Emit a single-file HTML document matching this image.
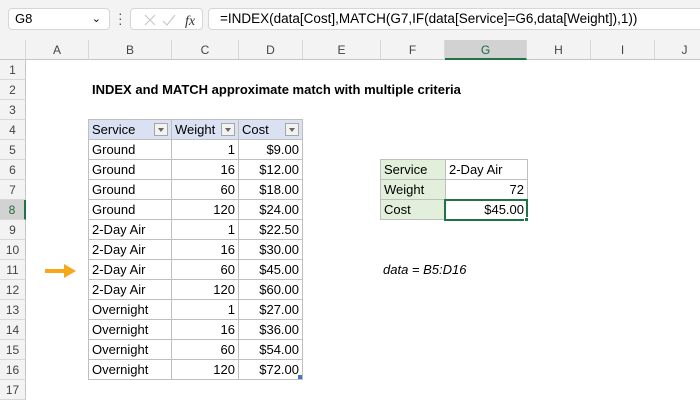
<!DOCTYPE html>
<html><head><style>
*{margin:0;padding:0;box-sizing:border-box}
body{width:700px;height:400px;overflow:hidden;background:#fff;font-family:"Liberation Sans",Calibri,sans-serif;font-size:13px;color:#000;position:relative}
.a{position:absolute}
.top{left:0;top:0;width:700px;height:40px;background:#f3f3f3}
.box{background:#fff;border:1px solid #d6d6d6;border-radius:4px;height:22px;top:8px}
.ch{top:40px;height:20px;background:#f3f3f3;border-right:1px solid #d8d8d8;border-bottom:1px solid #c6c6c6;text-align:center;line-height:20px;color:#444;font-size:12px}
.rh{left:0;width:26px;height:20px;background:#f3f3f3;border-bottom:1px solid #d8d8d8;border-right:1px solid #c6c6c6;text-align:center;line-height:20px;color:#444;font-size:12px}
.row{display:flex;height:20px}
.c{height:20px;line-height:19px;padding:0 3px;white-space:nowrap;border-right:1px solid #bfbfbf;border-bottom:1px solid #bfbfbf;position:relative;flex:none}
.r{text-align:right}
.hd .c{background:#d9e1f2}
.dd{position:absolute;right:3px;top:3px;width:14px;height:13px;border:1px solid #a6a6a6;background:#f2f2f2}
.dd:after{content:"";position:absolute;left:3px;top:4px;border-left:3px solid transparent;border-right:3px solid transparent;border-top:4px solid #666}
.g{background:#e2efda}
.w1{width:83px}.w2{width:67px}.w3{width:64px}
</style></head><body>
<div class="a top"></div>
<div class="a box" style="left:8px;width:102px;padding-left:6px;line-height:20px">G8<span style="position:absolute;right:8px;top:0;font-size:11px">&#8964;</span></div>
<div class="a" style="left:118px;top:11px;color:#555;font-size:14px;line-height:5px">·<br>·<br>·</div>
<div class="a box" style="left:130px;width:73px">
<svg width="73" height="22" style="position:absolute;left:0;top:0"><path d="M14 6l10 10M24 6l-10 10" stroke="#c8c8c8" stroke-width="1.2"/><path d="M32 12l4 4 8-10" stroke="#c8c8c8" stroke-width="1.2" fill="none"/><text x="54" y="16" font-family="Liberation Serif" font-style="italic" font-size="14" fill="#333">fx</text></svg></div>
<div class="a box" style="left:208px;width:500px;padding-left:11px;line-height:20px;font-size:13.5px">=INDEX(data[Cost],MATCH(G7,IF(data[Service]=G6,data[Weight]),1))</div>

<div class="a ch" style="left:0;width:26px"></div>
<div class="a ch" style="left:26px;width:63px">A</div>
<div class="a ch" style="left:89px;width:83px">B</div>
<div class="a ch" style="left:172px;width:67px">C</div>
<div class="a ch" style="left:239px;width:64px">D</div>
<div class="a ch" style="left:303px;width:78px">E</div>
<div class="a ch" style="left:381px;width:64px">F</div>
<div class="a ch" style="left:445px;width:82px;background:#d2d2d2;color:#1e6b3e;border-bottom:2px solid #217346">G</div>
<div class="a ch" style="left:527px;width:64px">H</div>
<div class="a ch" style="left:591px;width:64px">I</div>
<div class="a ch" style="left:655px;width:60px">J</div>

<div class="a rh" style="top:60px">1</div>
<div class="a rh" style="top:80px">2</div>
<div class="a rh" style="top:100px">3</div>
<div class="a rh" style="top:120px">4</div>
<div class="a rh" style="top:140px">5</div>
<div class="a rh" style="top:160px">6</div>
<div class="a rh" style="top:180px">7</div>
<div class="a rh" style="top:200px;background:#d2d2d2;color:#1e6b3e;border-right:2px solid #217346">8</div>
<div class="a rh" style="top:220px">9</div>
<div class="a rh" style="top:240px">10</div>
<div class="a rh" style="top:260px">11</div>
<div class="a rh" style="top:280px">12</div>
<div class="a rh" style="top:300px">13</div>
<div class="a rh" style="top:320px">14</div>
<div class="a rh" style="top:340px">15</div>
<div class="a rh" style="top:360px">16</div>
<div class="a rh" style="top:380px">17</div>

<div class="a" style="left:92px;top:80px;line-height:20px;font-weight:bold;font-size:13px">INDEX and MATCH approximate match with multiple criteria</div>

<div class="a" style="left:88px;top:119px;border-left:1px solid #bfbfbf;border-top:1px solid #bfbfbf">
<div class="row hd" style="height:20px"><div class="c w1">Service<span class="dd"></span></div><div class="c w2">Weight<span class="dd"></span></div><div class="c w3">Cost<span class="dd"></span></div></div>
<div class="row"><div class="c w1">Ground</div><div class="c w2 r">1</div><div class="c w3 r">$9.00</div></div>
<div class="row"><div class="c w1">Ground</div><div class="c w2 r">16</div><div class="c w3 r">$12.00</div></div>
<div class="row"><div class="c w1">Ground</div><div class="c w2 r">60</div><div class="c w3 r">$18.00</div></div>
<div class="row"><div class="c w1">Ground</div><div class="c w2 r">120</div><div class="c w3 r">$24.00</div></div>
<div class="row"><div class="c w1">2-Day Air</div><div class="c w2 r">1</div><div class="c w3 r">$22.50</div></div>
<div class="row"><div class="c w1">2-Day Air</div><div class="c w2 r">16</div><div class="c w3 r">$30.00</div></div>
<div class="row"><div class="c w1">2-Day Air</div><div class="c w2 r">60</div><div class="c w3 r">$45.00</div></div>
<div class="row"><div class="c w1">2-Day Air</div><div class="c w2 r">120</div><div class="c w3 r">$60.00</div></div>
<div class="row"><div class="c w1">Overnight</div><div class="c w2 r">1</div><div class="c w3 r">$27.00</div></div>
<div class="row"><div class="c w1">Overnight</div><div class="c w2 r">16</div><div class="c w3 r">$36.00</div></div>
<div class="row"><div class="c w1">Overnight</div><div class="c w2 r">60</div><div class="c w3 r">$54.00</div></div>
<div class="row"><div class="c w1">Overnight</div><div class="c w2 r">120</div><div class="c w3 r">$72.00</div></div>
</div>
<div class="a" style="left:298px;top:375px;width:4px;height:4px;background:#4472c4"></div>

<svg class="a" style="left:44px;top:262px" width="36" height="18"><path d="M1 9h22" stroke="#f5a81c" stroke-width="4"/><path d="M20 2l12 7-12 7z" fill="#f5a81c"/></svg>

<div class="a" style="left:380px;top:159px;border-left:1px solid #bfbfbf;border-top:1px solid #bfbfbf">
<div class="row"><div class="c g" style="width:65px">Service</div><div class="c" style="width:82px">2-Day Air</div></div>
<div class="row"><div class="c g" style="width:65px">Weight</div><div class="c r" style="width:82px">72</div></div>
<div class="row"><div class="c g" style="width:65px">Cost</div><div class="c r" style="width:82px">$45.00</div></div>
</div>
<div class="a" style="left:444px;top:199px;width:84px;height:22px;border:2px solid #217346"></div>
<div class="a" style="left:524px;top:217px;width:5px;height:5px;background:#217346;border:1px solid #fff"></div>

<div class="a" style="left:383px;top:260px;line-height:20px;font-style:italic">data = B5:D16</div>
</body></html>
